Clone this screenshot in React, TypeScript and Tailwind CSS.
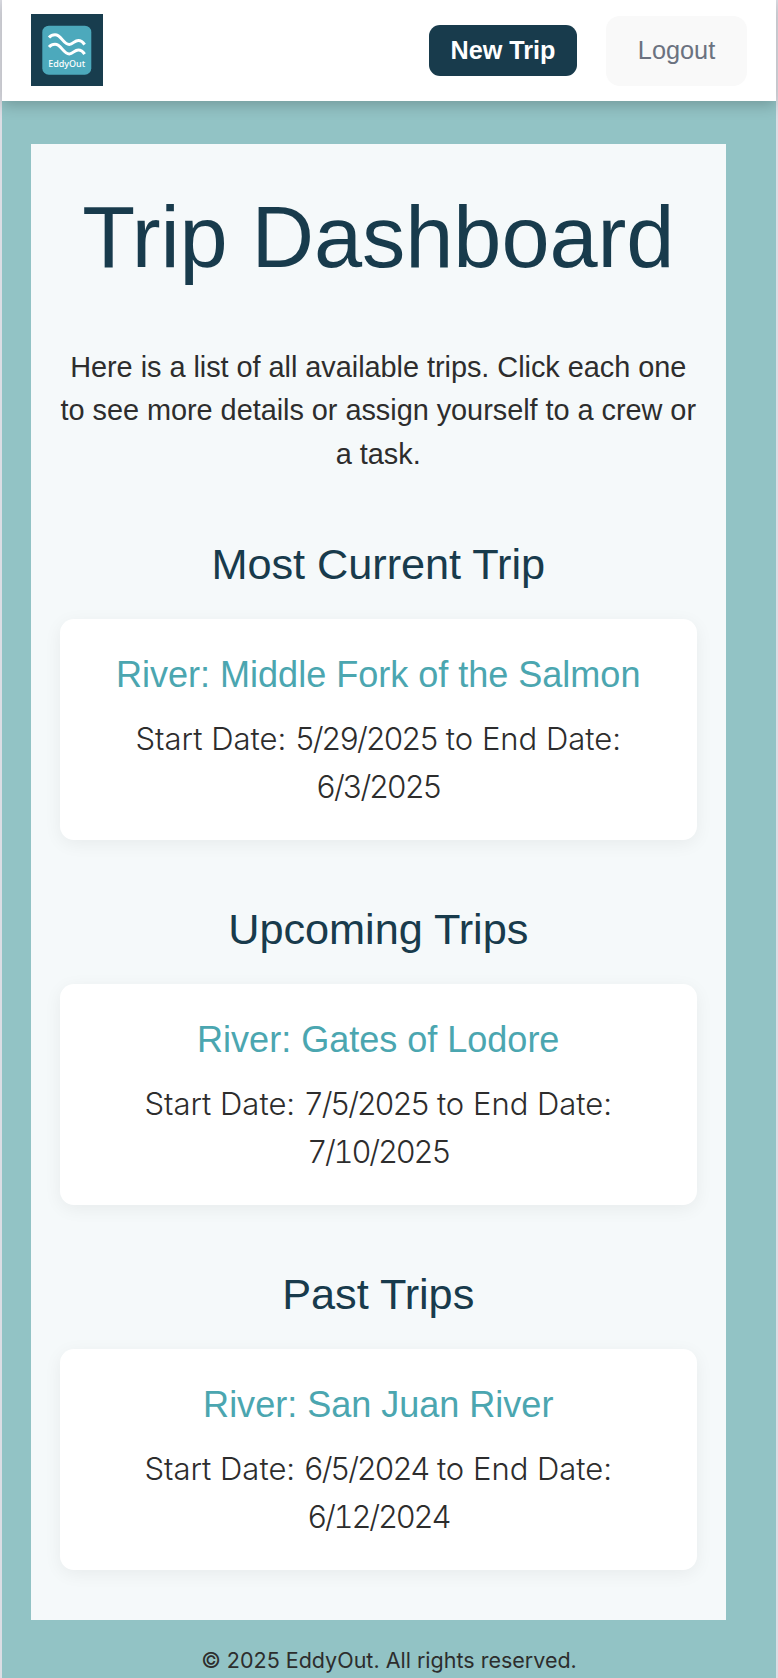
const trips = [
  { heading: "Most Current Trip", river: "Middle Fork of the Salmon", start: "5/29/2025", end: "6/3/2025" },
  { heading: "Upcoming Trips", river: "Gates of Lodore", start: "7/5/2025", end: "7/10/2025" },
  { heading: "Past Trips", river: "San Juan River", start: "6/5/2024", end: "6/12/2024" },
];

function Logo() {
  return (
    <svg className="mb-px h-[72px] w-[72px]" viewBox="0 0 72 72" role="img" aria-label="EddyOut">
      <rect width="72" height="72" fill="#183d4e" />
      <rect x="11.3" y="11.7" width="49" height="49" rx="6.5" fill="#4ca9bc" />
      <g fill="none" stroke="#fff" strokeWidth="3">
        <path d="M18 23.6C20 21.400 22 20.800 24 20.800C30.500 20.800 32 30.400 38.300 30.400C42 30.400 43.500 26.400 47.300 26.400C50 26.400 52 28 53.600 30.600" />
        <path d="M18 33.100C20 30.900 22 30.300 24 30.300C30.500 30.300 32 39.900 38.300 39.900C42 39.900 43.500 35.900 47.300 35.900C50 35.900 52 37.500 53.600 40.100" />
      </g>
      <text x="35.7" y="53" textAnchor="middle" textLength="37" lengthAdjust="spacingAndGlyphs" fill="#fff" className="font-['Noto_Sans',sans-serif] text-[9.300px] font-medium">EddyOut</text>
    </svg>
  );
}

function TripDate({ value }: { value: string }) {
  return <span className="tracking-[-2.2px] tabular-nums">{value}</span>;
}

function TripSection({ heading, river, start, end }: (typeof trips)[number]) {
  return (
    <section className="h-[365.2px] text-center">
      <h2 className="h-[79px] text-[43.3px] leading-[48px] tracking-[-0.05px] text-[#183b4c]">{heading}</h2>
      <article className="h-[221px] rounded-[14px] bg-white pt-[34px] shadow-[0_4px_18px_rgba(0,0,0,0.06)]">
        <h3 className="text-[36.1px] leading-[43px] tracking-[-0.03px] text-[#4ba6b0]">River: {river}</h3>
        <p className="mx-auto mt-[19px] w-[540px] font-['Inter',sans-serif] text-[31px] leading-[48px] font-light text-[#2d2d2d]">
          Start Date: <TripDate value={start} /> to End Date:
          <br />
          <TripDate value={end} />
        </p>
      </article>
    </section>
  );
}

export default function App() {
  return (
    <div className="flex h-[1678px] w-[778px] flex-col border-x-2 border-[#dcdde4] bg-[#92c3c5] font-['Liberation_Sans',Arial,sans-serif]">
      <header className="flex h-[101px] shrink-0 items-center bg-white px-[29px] shadow-[0_4px_14px_rgba(0,0,0,0.22)]">
        <Logo />
        <nav className="ml-auto flex items-center gap-[29px]">
          <button className="h-[51px] w-[148px] rounded-[11px] bg-[#183b4c] text-[25.2px] font-bold text-white">New Trip</button>
          <button className="h-[70px] w-[141px] rounded-[14px] bg-[#f9f9f9] text-[25.3px] text-[#6b7280]">Logout</button>
        </nav>
      </header>
      <main className="mt-[43px] ml-[29px] h-[1476px] w-[694.5px] shrink-0 bg-[#f5f9fa] px-[29px] pt-[41px] text-center">
        <h1 className="h-[161px] text-[86.6px] leading-[104px] tracking-[-0.1px] whitespace-nowrap text-[#183b4c]">Trip Dashboard</h1>
        <p className="-mx-2 h-[194px] text-[28.9px] leading-[43.3px] tracking-[-0.04px] text-[#2d2d2d]">
          Here is a list of all available trips. Click each one
          <br />
          to see more details or assign yourself to a crew or
          <br />a task.
        </p>
        {trips.map((trip) => (
          <TripSection key={trip.heading} {...trip} />
        ))}
      </main>
      <footer className="pt-[26px] text-center font-['Inter',sans-serif] text-[21.5px] leading-[28px] text-[#2d2d2d]">© 2025 EddyOut. All rights reserved.</footer>
    </div>
  );
}
